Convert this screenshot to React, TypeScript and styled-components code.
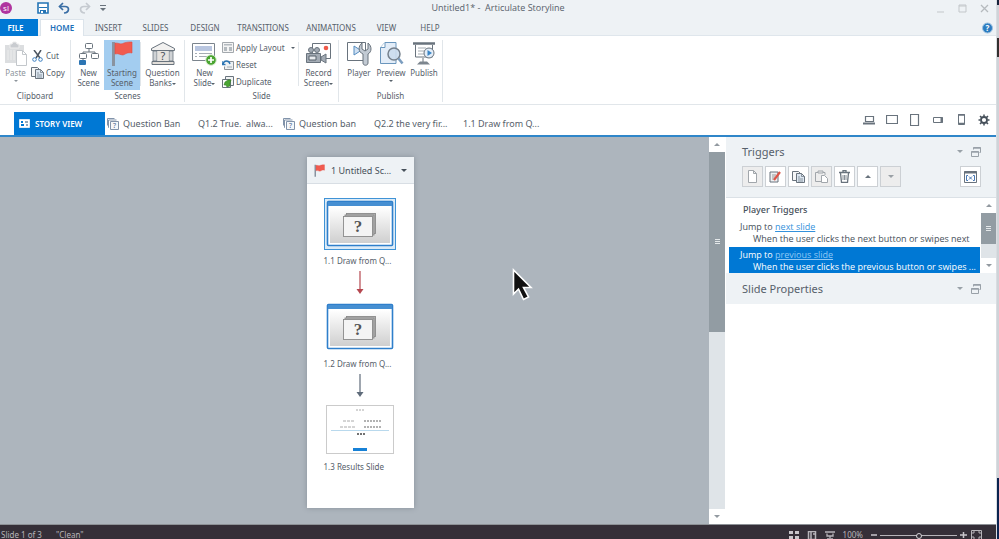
import React from "react";
import styled, { createGlobalStyle } from "styled-components";

const c = {
  blue: "#0078d4",
  line: "#2f86c9",
  chrome: "#eef2f5",
  canvas: "#adb5bd",
  text: "#56606a",
  dark: "#46505a",
  rule: "#e1e6ea",
  ink: "#69737d",
};

const GlobalStyle = createGlobalStyle`
  * { box-sizing: border-box; }
  body { margin: 0; overflow: hidden; font-family: "Noto Sans", "Open Sans", sans-serif; color: ${c.text}; }
  button { font: inherit; color: inherit; border: 0; padding: 0; background: none; }
  svg { display: block; flex: none; }
  h2, h3, p, ul { margin: 0; padding: 0; font-weight: 400; list-style: none; }
`;

const Screen = styled.div`
  display: flex;
  height: 100vh;
  overflow: hidden;
  background: linear-gradient(#16233c 0 5px, #cfd3d8 5px 38px, #33302f 38px 57px, #cfd3d8 57px 478px, #0b2450 478px);
`;
const Window = styled.div`
  flex: 1;
  min-width: 0;
  margin-right: 2px;
  display: flex;
  flex-direction: column;
  background: #fff;
  border-right: 1px solid #d9dde1;
`;

/* Title bar */
const TitleBar = styled.header`
  display: grid;
  grid-template-columns: 1fr auto 1fr;
  align-items: start;
  height: 19px;
  background: ${c.chrome};
  font-family: "Open Sans", "Noto Sans", sans-serif;
  font-size: 9px;
  line-height: 15px;
`;
const QuickAccess = styled.div`
  display: flex;
  align-items: center;
  gap: 9px;
  height: 15px;
`;
const Logo = styled.div`
  width: 12px;
  height: 12px;
  margin-right: 16px;
  border-radius: 50%;
  background: #b0359f;
  color: #fff;
  font-size: 8px;
  line-height: 11px;
  text-align: center;
`;
const Title = styled.div`
  white-space: pre;
`;
const WindowButtons = styled.div`
  display: flex;
  align-items: center;
  justify-content: flex-end;
  gap: 13px;
  height: 17px;
  padding-right: 7px;
`;

/* Ribbon */
const RibbonTabs = styled.nav`
  display: flex;
  height: 17px;
  background: ${c.chrome};
  border-bottom: 1px solid #dfe6ec;
  font-size: 8px;
`;
const RibbonTab = styled.button<{ $w: number; $kind?: "file" | "active" }>`
  width: ${(p) => p.$w}px;
  height: 17px;
  line-height: 16px;
  text-align: center;
  ${(p) => p.$kind === "file" && `background: ${c.blue}; color: #fff; font-weight: 600; margin-right: 2px; padding-right: 7px;`}
  ${(p) => p.$kind === "active" && "background: #fff; color: #1c6fb8; font-weight: 600; border: 1px solid #dce4eb; border-bottom: 0;"}
`;
const HelpButton = styled.button`
  margin-left: auto;
  margin-right: 3px;
`;
const Ribbon = styled.section`
  display: flex;
  height: 69px;
  padding-top: 4px;
  border-bottom: 1px solid ${c.rule};
  font-size: 8px;
  line-height: 10px;
`;
const Group = styled.div<{ $w: number }>`
  width: ${(p) => p.$w}px;
  display: flex;
  flex-direction: column;
  border-right: 1px solid ${c.rule};
  margin-bottom: 2px;
`;
const GroupBody = styled.div<{ $indent?: number }>`
  display: flex;
  height: 50px;
  padding-left: ${(p) => p.$indent ?? 0}px;
`;
const GroupName = styled.div`
  line-height: 12px;
  text-align: center;
`;
const BigButton = styled.button<{ $w: number; $on?: boolean; $faded?: boolean }>`
  width: ${(p) => p.$w}px;
  display: flex;
  flex-direction: column;
  align-items: center;
  gap: 2px;
  padding-top: 1px;
  white-space: nowrap;
  background: ${(p) => (p.$on ? "#a3cdf0" : "none")};
  color: ${(p) => (p.$faded ? "#8d959c" : "inherit")};
`;
const Stack = styled.div<{ $w: number; $top?: number }>`
  width: ${(p) => p.$w}px;
  padding-top: ${(p) => p.$top ?? 0}px;
  display: flex;
  flex-direction: column;
`;
const SmallButton = styled.button`
  display: flex;
  align-items: center;
  gap: 2px;
  height: 17px;
  white-space: nowrap;
  & > :nth-child(2) { margin-left: auto; margin-right: 1px; }
`;
const Divider = styled.div<{ $gap?: number }>`
  width: 1px;
  height: 44px;
  margin: 2px 0 0 ${(p) => p.$gap ?? 0}px;
  background: ${c.rule};
`;
const Caret = styled.span<{ $up?: boolean; $size?: number }>`
  display: inline-block;
  width: 0;
  height: 0;
  vertical-align: middle;
  border: ${(p) => p.$size ?? 2}px solid transparent;
  ${(p) => (p.$up ? "border-top-width: 0; border-bottom-color: currentColor;" : "border-bottom-width: 0; border-top-color: currentColor;")}
`;

/* Document tabs */
const DocumentBar = styled.nav`
  display: flex;
  align-items: flex-end;
  height: 32px;
  padding-left: 14px;
  border-bottom: 2px solid ${c.line};
  font-size: 9px;
`;
const StoryTab = styled.button`
  display: flex;
  align-items: center;
  gap: 5px;
  width: 91px;
  height: 23px;
  padding-left: 5px;
  background: ${c.blue};
  color: #fff;
  font-size: 8px;
  font-weight: 600;
`;
const DocTab = styled.button<{ $w: number }>`
  display: flex;
  align-items: center;
  gap: 4px;
  width: ${(p) => p.$w}px;
  height: 23px;
  padding-left: 2px;
  white-space: pre;
`;
const Devices = styled.div`
  display: flex;
  align-items: center;
  gap: 11px;
  height: 31px;
  margin-left: auto;
  padding-right: 6px;
`;
const DeviceButton = styled.button`
  display: flex;
  justify-content: center;
  width: 12px;
`;

/* Workspace */
const Workspace = styled.div`
  flex: 1;
  min-height: 0;
  display: flex;
`;
const Canvas = styled.main`
  flex: 1;
  min-width: 0;
  position: relative;
  background: ${c.canvas};
  padding: 20px 0 0;
`;
const Scene = styled.article`
  width: 107px;
  height: 351px;
  margin-left: 307px;
  background: #fff;
  box-shadow: 0 0 5px rgba(80, 90, 100, 0.4);
  font-size: 8px;
`;
const SceneHeader = styled.header`
  display: flex;
  align-items: center;
  height: 27px;
  padding: 0 7px;
  background: ${c.chrome};
  border-bottom: 1px solid #d8dee4;
  font-size: 9px;
  gap: 6px;
  white-space: nowrap;
  color: ${c.dark};
`;
const SceneMenu = styled.button`
  margin-left: auto;
  display: flex;
`;
const SlideFlow = styled.div`
  display: flex;
  flex-direction: column;
  align-items: center;
  padding: 14px 1px 0 0;
`;
const Thumb = styled.button<{ $selected?: boolean }>`
  width: 72px;
  height: 52px;
  display: flex;
  align-items: center;
  justify-content: center;
  border: 1px solid ${(p) => (p.$selected ? "#3f93d6" : "transparent")};
  background: ${(p) => (p.$selected ? "#dcebf7" : "none")};
`;
const ThumbName = styled.div`
  width: 73px;
  height: 21px;
  line-height: 21px;
  white-space: nowrap;
`;
const Connector = styled.div`
  height: 30px;
`;
const Pointer = styled.div`
  position: absolute;
  left: 512px;
  top: 131px;
`;

const ScrollBar = styled.div<{ $w: number; $thumb: number; $edge: number }>`
  width: ${(p) => p.$w}px;
  display: grid;
  grid-template-rows: ${(p) => p.$edge}px ${(p) => p.$thumb}px 1fr ${(p) => p.$edge}px;
  background: #dfe4e8;
  color: #9299a0;
`;
const ScrollButton = styled.button`
  display: flex;
  align-items: center;
  justify-content: center;
  background: #fff;
`;
const ScrollThumb = styled.div`
  display: flex;
  align-items: center;
  justify-content: center;
  background: #929ca3;
`;

/* Side panels */
const Side = styled.aside`
  width: 271px;
  padding-left: 1px;
  display: flex;
  flex-direction: column;
`;
const PanelHeader = styled.header<{ $h: number }>`
  display: flex;
  align-items: center;
  height: ${(p) => p.$h}px;
  padding: 0 15px 0 16px;
  background: ${c.chrome};
  color: #99a1a8;
`;
const PanelTitle = styled.h2`
  flex: 1;
  font-size: 11px;
  color: ${c.text};
`;
const PanelButton = styled.button`
  display: flex;
  margin-left: 8px;
`;
const TriggerTools = styled.div`
  display: flex;
  gap: 2px;
  height: 32px;
  padding: 0 15px 0 16px;
  background: ${c.chrome};
  border-bottom: 1px solid #dbe1e6;
`;
const ToolButton = styled.button<{ $off?: boolean; $last?: boolean }>`
  display: flex;
  align-items: center;
  justify-content: center;
  width: 21px;
  height: 21px;
  border: 1px solid #ccd0d4;
  background: ${(p) => (p.$off ? "#ededed" : "#fff")};
  color: ${(p) => (p.$off ? "#9aa0a5" : c.ink)};
  margin-left: ${(p) => (p.$last ? "auto" : "0")};
`;
const TriggerArea = styled.div`
  display: flex;
  height: 75px;
`;
const TriggerList = styled.div`
  flex: 1;
  padding: 0 1px 0 3px;
  font-family: "Open Sans", "Noto Sans", sans-serif;
  font-size: 9px;
  min-width: 0;
`;
const TriggerHeading = styled.h3`
  padding: 5px 0 0 14px;
  font-family: "Noto Sans", sans-serif;
  font-size: 9px;
  font-weight: 500;
  line-height: 13px;
  color: ${c.dark};
`;
const Trigger = styled.li<{ $selected?: boolean }>`
  padding: 2px 0 1px 11px;
  margin-top: ${(p) => (p.$selected ? "1px" : "3px")};
  line-height: 12px;
  white-space: nowrap;
  background: ${(p) => (p.$selected ? c.blue : "transparent")};
  color: ${(p) => (p.$selected ? "#fff" : c.dark)};
  a { color: ${(p) => (p.$selected ? "#8fc8f5" : "#3491db")}; }
  p { padding-left: 13px; }
`;

/* Status bar */
const StatusBar = styled.footer`
  display: flex;
  align-items: flex-start;
  height: 15px;
  padding-top: 5px;
  border-top: 1px solid #8d9196;
  background: #352f38;
  color: #b7b4b9;
  font-size: 8px;
  line-height: 9px;
  white-space: nowrap;
`;
const StatusText = styled.span<{ $w: number }>`
  width: ${(p) => p.$w}px;
  padding-left: 1px;
`;
const ViewTools = styled.div`
  display: flex;
  gap: 8px;
  margin-left: auto;
  align-items: flex-start;
  padding-right: 14px;
`;
const ViewButton = styled.button`
  padding-top: 1px;
`;
const Range = styled.input`
  appearance: none;
  width: 77px;
  height: 7px;
  margin: 2px 0 0;
  background: linear-gradient(#b7b4b9, #b7b4b9) center / 100% 1px no-repeat;
  &::-webkit-slider-thumb {
    appearance: none;
    width: 6px;
    height: 6px;
    border: 1px solid #d8d6da;
    border-radius: 50%;
    background: #352f38;
  }
`;
const ZoomGroup = styled.div`
  display: flex;
  gap: 3px;
`;

/* Icons */
type IconProps = { w: number; h: number; children: React.ReactNode; box?: string };
const Icon = ({ w, h, children, box }: IconProps) => (
  <svg width={w} height={h} viewBox={box ?? `0 0 ${w} ${h}`} fill="none" stroke={c.ink} strokeWidth="1" aria-hidden="true">
    {children}
  </svg>
);
const Save = () => (
  <Icon w={12} h={12}><path d="M1 1h10v10H1z" stroke="#2374b5" strokeWidth="1.6" fill="#fff" /><path d="M2 5.500h8" stroke="#2374b5" /><path d="M3 8h6v3H3z" fill="#2374b5" stroke="none" /><path d="M4 9h2v2H4z" fill="#fff" stroke="none" /></Icon>
);
const Undo = ({ flip }: { flip?: boolean }) => (
  <Icon w={12} h={12}>
    <g transform={flip ? "translate(12 0) scale(-1 1)" : undefined} stroke={flip ? "#c5cad0" : "#3a6ea5"} strokeWidth="1.7">
      <path d="M2 4.500h5c5 0 4.500 6-1 6.500" /><path d="M5 1 1.500 4.500 5 8" />
    </g>
  </Icon>
);
const Paste = () => (
  <Icon w={23} h={25}>
    <path d="M1 4h19v18H1z" fill="#dcdee0" stroke="none" /><path d="M6 3h2l1-2h3l1 2h2v4H6z" fill="#c9ccd0" stroke="#eee" />
    <path d="M4 9v10M7 9v10M10 9v10" stroke="#eceded" />
    <path d="M12.500 9.500h6l4 4v11h-10z" fill="#fff" stroke="#c3c7cb" /><path d="M18.500 9.500v4h4" stroke="#c3c7cb" />
  </Icon>
);
const Scissors = () => (
  <Icon w={13} h={12}><path d="M3 0l6 8M10 0 5 8" stroke="#4c5560" strokeWidth="1.500" /><circle cx="3.500" cy="9.500" r="1.800" stroke="#3d7fc0" /><circle cx="9.500" cy="9.500" r="1.800" stroke="#3d7fc0" /></Icon>
);
const Copy = () => (
  <Icon w={13} h={12}><path d="M.500 .500h6l2 2v7h-8z" fill="#f5f6f7" /><path d="M4.500 2.500h5l3 3v6h-8z" fill="#dce6f1" /><path d="M9.500 2.500v3h3M6 6h2M6 8h5M6 10h5" strokeWidth=".7" /></Icon>
);
const SceneTree = () => (
  <Icon w={20} h={25}><rect x="6.500" y="2.500" width="7" height="5" rx="1" /><path d="M10 8v3M4 13v-2h12v2" /><rect x=".5" y="12.500" width="7" height="5" rx="1" fill="#fff" /><rect x="12.500" y="12.500" width="7" height="5" rx="1" fill="#fff" /><path d="M4 17v3" /><rect x="0" y="19" width="7" height="5" rx="1" fill="#2c75b3" stroke="none" /></Icon>
);
const Flag = ({ w, h }: { w: number; h: number }) => (
  <Icon w={w} h={h} box="0 0 22 25"><path d="M1 1h3v24H1z" fill="#8993a0" stroke="none" /><path d="M4 2c5 0 5 2 9 0 3-1 5-1 8-1v11c-5-1-6 1-9 2-3 0-4-2-8-1z" fill="#f15b4f" stroke="#e04b42" strokeWidth=".6" /></Icon>
);
const Bank = () => (
  <Icon w={26} h={25}><path d="M1.500 7.500 13 1.500l11.500 6v2h-23z" fill="#f2f1f0" /><path d="M3 10h4v10H3zM19 10h4v10h-4z" fill="#cfd2d5" strokeWidth=".8" /><path d="M7.500 10h11v11h-11z" fill="#e6e3df" stroke="none" /><path d="M2 20.500h22v3H2z" fill="#e2ded9" /><text x="13" y="19" textAnchor="middle" fontSize="11" fill="#46505a" stroke="none">?</text></Icon>
);
const NewSlide = () => (
  <Icon w={25} h={25}><path d="M.500 2.500h22v17H.500z" fill="#fff" stroke="#7b848d" /><path d="M3 5h17v5H3z" fill="#b9c6e0" stroke="none" /><path d="M3 12.500h2M7 12.500h13M3 15.500h2M7 15.500h9" stroke="#a5acb3" /><circle cx="19" cy="19" r="5.300" fill="#4ba532" stroke="#dcedd6" /><path d="M19 16v6M16 19h6" stroke="#fff" strokeWidth="1.700" /></Icon>
);
const Layout = () => (
  <Icon w={12} h={12}><path d="M.500.500h11v10H.500z" fill="#f4f4f4" stroke="#a3a8ad" /><path d="M2 2h8v1.500H2zM2 5h3v4H2zM7 5h3v4H7z" fill="#b4babf" stroke="none" /></Icon>
);
const Reset = () => (
  <Icon w={12} h={12}><path d="M4.500 2.500h7v8h-9v-3" fill="#eef1f3" stroke="#8c9298" /><path d="M1 5c1-4 6-4 7 0M0 2v3.500h3.500" stroke="#2c75b3" strokeWidth="1.300" /><path d="M5 8h5" stroke="#a4abb1" /></Icon>
);
const Duplicate = () => (
  <Icon w={12} h={12}><path d="M3.500.500h8v9h-8z" fill="#f2f4f5" /><path d="M.500 3.500h8v8h-8z" fill="#fff" /><path d="M2 9l1-3 3-2h3l-1 3v3l-3 1-1-2z" fill="#4ba532" stroke="#35802a" strokeWidth=".6" /></Icon>
);
const Record = () => (
  <Icon w={26} h={25}><path d="M6.500 2.500h18v15h-18z" fill="#fff" /><circle cx="20" cy="7" r="2.300" fill="#f05a4a" stroke="none" /><circle cx="5" cy="9" r="2.500" fill="#a3abb4" /><circle cx="11" cy="9" r="2.500" fill="#a3abb4" /><path d="M.500 12.500h14v9H.500z" fill="#a3abb4" /><path d="M3 15h7v4H3z" fill="#e8ebee" stroke="#56606a" /><path d="m15 16 5-3v9l-5-3z" fill="#a3abb4" /></Icon>
);
const Player = () => (
  <Icon w={25} h={25}><path d="M.500 1.500h18v18H.500z" fill="#fff" /><path d="M7 5v9l7-4.500z" fill="#cfe0f2" stroke="#558cc0" /><path d="M15 2v6l3 2 3-2V2c4 3 4 9 0 11v9c0 3-5 3-5 0v-9c-5-2-5-8-1-11z" fill="#c2cad3" /></Icon>
);
const Preview = () => (
  <Icon w={25} h={25}><path d="M1.500 6.500 6 1.500h11v21H1.500z" fill="#e3edf8" stroke="#6a96bd" /><path d="M1.500 6.500H6v-5" fill="#fff" stroke="#6a96bd" /><circle cx="15" cy="13" r="6" fill="#cbdced" fillOpacity=".9" stroke="#75808c" strokeWidth="1.500" /><path d="m19.500 17.500 4 5" stroke="#7b9dbf" strokeWidth="2.600" /></Icon>
);
const Publish = () => (
  <Icon w={24} h={25}><path d="M1 2.500h22" strokeWidth="2.500" /><path d="M3.500 4v12h17V4" fill="#fff" /><path d="M6 7h8M6 10h6M6 13h6" stroke="#a4abb1" /><circle cx="17" cy="12" r="5" fill="#e3edf8" /><path d="M15.500 9v6l4.500-3z" fill="#3b86c6" stroke="none" /><path d="M11 17v4" /><path d="M5 23.500l3-3h7l3 3z" fill="#7c858e" stroke="none" /></Icon>
);
const Help = () => (
  <Icon w={11} h={15}><circle cx="5.500" cy="8" r="5" fill="#2c7cc0" stroke="#9cc1e0" /><text x="5.500" y="11" textAnchor="middle" fontSize="8" fontWeight="700" fill="#fff" stroke="none">?</text></Icon>
);
const StoryGlyph = () => (
  <Icon w={11} h={9}><path d="M.500.500h10v8H.500z" fill="#fff" stroke="#dceaf6" /><path d="M2 2h2v2H2zM2 5h3v2H2z" fill={c.blue} stroke="none" /><path d="M6 2h3v2H6zM7 5h2v2H7z" fill="#8fa5ba" stroke="none" /></Icon>
);
const BankGlyph = () => (
  <Icon w={12} h={12}><path d="M.500 7.500v-7h7M2 9.500H1.500V2h8" stroke="#8193aa" /><path d="M3.500 3.500h8v8h-8z" fill="#f4f7fa" stroke="#8193aa" /><text x="7.500" y="10.300" textAnchor="middle" fontSize="7" fill="#49668c" stroke="none">?</text></Icon>
);
const Stacked = () => (
  <Icon w={10} h={10}><g stroke="#99a1a8"><path d="M2.500 2.500v-2h7v5h-1" /><path d="M2.500 1h7" strokeWidth="1.500" /><path d="M.500 4.500h7v5h-7z" /><path d="M.500 5h7" strokeWidth="1.500" /></g></Icon>
);
const Grip = () => (<Icon w={5} h={6}><path d="M0 .500h5M0 2.500h5M0 4.500h5" stroke="#e4e8ea" /></Icon>);
const QuestionThumb = () => (
  <svg width="68" height="48" viewBox="0 0 68 48" aria-hidden="true">
    <defs><linearGradient id="face" x1="0" y1="0" x2="0" y2="1"><stop offset="0" stopColor="#fff" /><stop offset="1" stopColor="#cfcfcf" /></linearGradient></defs>
    <rect x="1.500" y="1.500" width="65" height="44" rx="1" fill="#fff" stroke="#2f7fcb" strokeWidth="1.600" />
    <rect x="2" y="2" width="64" height="4" fill="#468fd2" />
    <rect x="4" y="7" width="60" height="36" fill="url(#face)" />
    <g stroke="#8a8a8a" fill="#b5b5b5" strokeWidth=".9"><rect x="20.500" y="13.500" width="29" height="20" /><rect x="19" y="15" width="29" height="20" /><rect x="17.500" y="16.500" width="29" height="20" fill="#f4f4f4" /></g>
    <text x="32" y="32" textAnchor="middle" fontFamily="Liberation Serif, serif" fontSize="17" fontWeight="700" fill="#555">?</text>
  </svg>
);
const ResultThumb = () => (
  <svg width="68" height="50" viewBox="0 0 68 50" aria-hidden="true">
    <rect x=".500" y=".500" width="67" height="48" fill="#fff" stroke="#cbcbcb" />
    <path d="M30 5h8" stroke="#aaa" strokeDasharray="2 1" />
    <path d="M17 16h12M14 22h15" stroke="#aaa" strokeDasharray="3 1" />
    <path d="M38 16h17M38 22h17" stroke="#999" strokeWidth="1.500" strokeDasharray="2 1" />
    <path d="M5 25.500h58" stroke="#b9d9ed" /><path d="M31 29h8" stroke="#444" strokeWidth="1.500" strokeDasharray="2 1" />
    <path d="M27 43h14v3H27z" fill="#1781d6" />
  </svg>
);
const Arrow = ({ color }: { color: string }) => (
  <Connector><Icon w={8} h={24}><path d="M4 0v18" stroke={color} strokeWidth="1.200" /><path d="M.500 18h7L4 23z" fill={color} stroke="none" /></Icon></Connector>
);

const Scroll = ({ w, thumb, edge }: { w: number; thumb: number; edge: number }) => (
  <ScrollBar $w={w} $thumb={thumb} $edge={edge}>
    <ScrollButton aria-label="Scroll up"><Caret $up $size={3} /></ScrollButton>
    <ScrollThumb><Grip /></ScrollThumb>
    <span />
    <ScrollButton aria-label="Scroll down"><Caret $size={3} /></ScrollButton>
  </ScrollBar>
);

const ribbonTabs: [string, number][] = [["INSERT", 49], ["SLIDES", 45], ["DESIGN", 54], ["TRANSITIONS", 62], ["ANIMATIONS", 74], ["VIEW", 37], ["HELP", 50]];

export default function App() {
  return (
    <Screen>
      <GlobalStyle />
      <Window>
        <TitleBar>
          <QuickAccess>
            <Logo>sl</Logo>
            <button aria-label="Save"><Save /></button>
            <button aria-label="Undo"><Undo /></button>
            <button aria-label="Redo"><Undo flip /></button>
            <button aria-label="Customize"><Icon w={6} h={6}><path d="M0 .500h6" /><path d="M0 3h6L3 6z" fill={c.ink} stroke="none" /></Icon></button>
          </QuickAccess>
          <Title>Untitled1* -  Articulate Storyline</Title>
          <WindowButtons>
            <button aria-label="Minimize"><Icon w={9} h={9}><path d="M1 8h7" stroke="#c3c7ca" /></Icon></button>
            <button aria-label="Maximize"><Icon w={9} h={9}><path d="M1 1h7v7H1zM1 2h7" stroke="#c3c7ca" /></Icon></button>
            <button aria-label="Close"><Icon w={9} h={9}><path d="m1 1 7 7M8 1 1 8" stroke="#b5babe" strokeWidth="1.300" /></Icon></button>
          </WindowButtons>
        </TitleBar>
        <RibbonTabs>
          <RibbonTab $w={38} $kind="file">FILE</RibbonTab>
          <RibbonTab $w={44} $kind="active">HOME</RibbonTab>
          {ribbonTabs.map(([name, w]) => <RibbonTab key={name} $w={w}>{name}</RibbonTab>)}
          <HelpButton aria-label="Help"><Help /></HelpButton>
        </RibbonTabs>
        <Ribbon>
          <Group $w={71}>
            <GroupBody>
              <BigButton $w={31} $faded><Paste /><span>Paste</span><Caret /></BigButton>
              <Stack $w={38} $top={7}>
                <SmallButton><Scissors />Cut</SmallButton>
                <SmallButton><Copy />Copy</SmallButton>
              </Stack>
            </GroupBody>
            <GroupName>Clipboard</GroupName>
          </Group>
          <Group $w={114}>
            <GroupBody $indent={2}>
              <BigButton $w={31}><SceneTree /><span>New<br />Scene</span></BigButton>
              <BigButton $w={36} $on><Flag w={22} h={25} /><span>Starting<br />Scene</span></BigButton>
              <Divider />
              <BigButton $w={43}><Bank /><span>Question<br />Banks<Caret /></span></BigButton>
            </GroupBody>
            <GroupName>Scenes</GroupName>
          </Group>
          <Group $w={154}>
            <GroupBody $indent={2}>
              <BigButton $w={35}><NewSlide /><span>New<br />Slide<Caret /></span></BigButton>
              <Stack $w={74}>
                <SmallButton><Layout />Apply Layout<Caret /></SmallButton>
                <SmallButton><Reset />Reset</SmallButton>
                <SmallButton><Duplicate />Duplicate</SmallButton>
              </Stack>
              <Divider $gap={2} />
              <BigButton $w={39}><Record /><span>Record<br />Screen<Caret /></span></BigButton>
            </GroupBody>
            <GroupName>Slide</GroupName>
          </Group>
          <Group $w={104}>
            <GroupBody $indent={4}>
              <BigButton $w={32}><Player /><span>Player</span></BigButton>
              <BigButton $w={32}><Preview /><span>Preview</span><Caret /></BigButton>
              <BigButton $w={34}><Publish /><span>Publish</span></BigButton>
            </GroupBody>
            <GroupName>Publish</GroupName>
          </Group>
        </Ribbon>
        <DocumentBar>
          <StoryTab><StoryGlyph />STORY VIEW</StoryTab>
          <DocTab $w={91}><BankGlyph />Question Ban</DocTab>
          <DocTab $w={85}>Q1.2 True.  alwa...</DocTab>
          <DocTab $w={91}><BankGlyph />Question ban</DocTab>
          <DocTab $w={89}>Q2.2 the very fir...</DocTab>
          <DocTab $w={90}>1.1 Draw from Q...</DocTab>
          <Devices>
            <DeviceButton aria-label="Desktop"><Icon w={12} h={10}><path d="M2.500 1.500h8v5h-8z" strokeWidth="1.200" /><path d="M0 8.500h12" strokeWidth="2" /></Icon></DeviceButton>
            <DeviceButton aria-label="Tablet landscape"><Icon w={12} h={10}><path d="M.500.500h11v8H.500z" strokeWidth="1.200" /></Icon></DeviceButton>
            <DeviceButton aria-label="Tablet portrait"><Icon w={10} h={12}><path d="M.500.500h8v11h-8z" strokeWidth="1.200" /></Icon></DeviceButton>
            <DeviceButton aria-label="Phone landscape"><Icon w={12} h={8}><path d="M1.500 1.500h9v5h-9z" /><path d="M9.500 1v6" strokeWidth="2" /></Icon></DeviceButton>
            <DeviceButton aria-label="Phone portrait"><Icon w={7} h={11}><path d="M.500.500h6v10h-6z" /><path d="M0 1h7M0 9.500h7" strokeWidth="1.500" /></Icon></DeviceButton>
            <DeviceButton aria-label="Player settings"><Icon w={12} h={12}><circle cx="6" cy="6" r="3" stroke="#46505a" strokeWidth="1.800" /><path d="M6 .5v2M6 9.500v2M.5 6h2M9.500 6h2M2 2l1.500 1.500M8.500 8.500 10 10M2 10l1.500-1.500M8.500 3.500 10 2" stroke="#46505a" strokeWidth="1.500" /></Icon></DeviceButton>
          </Devices>
        </DocumentBar>
        <Workspace>
          <Canvas>
            <Scene>
              <SceneHeader><Flag w={11} h={13} />1 Untitled Sc...<SceneMenu aria-label="Scene menu"><Caret $size={3} /></SceneMenu></SceneHeader>
              <SlideFlow>
                <Thumb $selected aria-label="Slide 1.1"><QuestionThumb /></Thumb>
                <ThumbName>1.1 Draw from Q...</ThumbName>
                <Arrow color="#b5474f" />
                <Thumb aria-label="Slide 1.2"><QuestionThumb /></Thumb>
                <ThumbName>1.2 Draw from Q...</ThumbName>
                <Arrow color="#5f6b7a" />
                <Thumb aria-label="Slide 1.3"><ResultThumb /></Thumb>
                <ThumbName>1.3 Results Slide</ThumbName>
              </SlideFlow>
            </Scene>
            <Pointer><svg width="21" height="34" viewBox="0 0 21 34" aria-hidden="true"><path d="M1.500 2v24l5-5 5 10.500 5-2.500-5-9.500h7.500z" fill="#111" stroke="#fff" strokeWidth="1.600" /></svg></Pointer>
          </Canvas>
          <Scroll w={16} thumb={180} edge={15} />
          <Side>
            <PanelHeader $h={29}>
              <PanelTitle>Triggers</PanelTitle>
              <PanelButton aria-label="Triggers menu"><Caret $size={3} /></PanelButton>
              <PanelButton aria-label="Undock triggers"><Stacked /></PanelButton>
            </PanelHeader>
            <TriggerTools>
              <ToolButton $off aria-label="New trigger"><Icon w={11} h={13}><path d="M1.500.500h5l3 3v9h-8zM6.500.500v3h3" stroke="#a1a6ab" fill="#fff" /></Icon></ToolButton>
              <ToolButton aria-label="Edit trigger"><Icon w={13} h={12}><path d="M1 1h8v10H1z" fill="#eef1f3" /><path d="M3 4h4M3 6h3M3 8h3" stroke="#999" /><path d="m5 9 6-8" stroke="#dc5548" strokeWidth="2.200" /></Icon></ToolButton>
              <ToolButton aria-label="Copy trigger"><Copy /></ToolButton>
              <ToolButton $off aria-label="Paste trigger"><Icon w={13} h={13}><path d="M3 2.500H.500v9H6M8 2.500h2V5M3 3V1h5v2z" stroke="#a1a6ab" /><path d="M6.500 5.500h3l3 3v4h-6z" stroke="#a1a6ab" fill="#fff" /></Icon></ToolButton>
              <ToolButton aria-label="Delete trigger"><Icon w={11} h={13}><path d="M0 2.500h11M4 2V.500h3V2M1.500 3l1 9.500h6l1-9.500" strokeWidth="1.300" /><path d="M4 5v5M5.500 5v5M7 5v5" strokeWidth=".8" /></Icon></ToolButton>
              <ToolButton aria-label="Move up"><Caret $up $size={3} /></ToolButton>
              <ToolButton $off aria-label="Move down"><Caret $size={3} /></ToolButton>
              <ToolButton $last aria-label="Variables"><Icon w={13} h={12}><path d="M.500.500h12v11H.500z" /><path d="M0 1.500h13" strokeWidth="2" /><path d="M4 4.500H2.500v5H4M9 4.500h1.500v5H9M5 5.500l3 3M8 5.500l-3 3" stroke="#4778b5" /></Icon></ToolButton>
            </TriggerTools>
            <TriggerArea>
              <TriggerList>
                <TriggerHeading>Player Triggers</TriggerHeading>
                <ul>
                  <Trigger>Jump to <a href="#next">next slide</a><p>When the user clicks the next button or swipes next</p></Trigger>
                  <Trigger $selected>Jump to <a href="#previous">previous slide</a><p>When the user clicks the previous button or swipes ...</p></Trigger>
                </ul>
              </TriggerList>
              <Scroll w={15} thumb={31} edge={15} />
            </TriggerArea>
            <PanelHeader $h={31}>
              <PanelTitle>Slide Properties</PanelTitle>
              <PanelButton aria-label="Slide properties menu"><Caret $size={3} /></PanelButton>
              <PanelButton aria-label="Undock slide properties"><Stacked /></PanelButton>
            </PanelHeader>
          </Side>
        </Workspace>
        <StatusBar>
          <StatusText $w={55}>Slide 1 of 3</StatusText>
          <StatusText $w={50}>"Clean"</StatusText>
          <ViewTools>
            <ViewButton aria-label="Story view"><Icon w={10} h={8}><path d="M0 0h4v3H0zM6 0h4v3H6zM0 5h4v3H0zM6 5h4v3H6z" fill="#c9c6cb" stroke="none" /></Icon></ViewButton>
            <ViewButton aria-label="Slide view"><Icon w={10} h={8}><path d="M1.500.500h7v8h-7zM4 0v8M6 3h2" stroke="#b7b4b9" strokeWidth="1.500" /></Icon></ViewButton>
            <ViewButton aria-label="Preview"><Icon w={10} h={8}><path d="M0 1h10M2 2.500v2.500h6V2.500M5 5v2M2 8h6" stroke="#b7b4b9" strokeWidth="1.300" /></Icon></ViewButton>
            <span>100%</span>
            <ZoomGroup>
              <button aria-label="Zoom out"><Icon w={6} h={9}><path d="M0 5h6" stroke="#c9c6cb" strokeWidth="1.500" /></Icon></button>
              <Range type="range" aria-label="Zoom" defaultValue={50} />
              <button aria-label="Zoom in"><Icon w={7} h={9}><path d="M0 5h7M3.500 2v6" stroke="#c9c6cb" strokeWidth="1.500" /></Icon></button>
              <button aria-label="Fit to window"><Icon w={12} h={9}><path d="M1.500.500h10v9h-10zM3 4V2h2M8 2h2v2M3 6v2h2M10 6v2H8" stroke="#b7b4b9" /></Icon></button>
            </ZoomGroup>
          </ViewTools>
        </StatusBar>
      </Window>
    </Screen>
  );
}
